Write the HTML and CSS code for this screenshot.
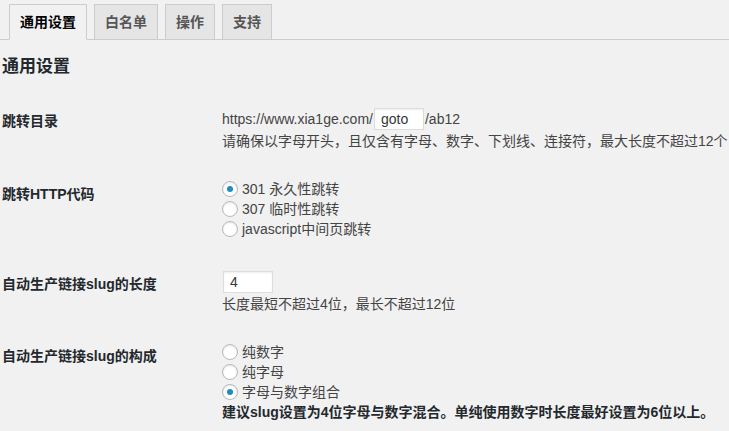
FILE: index.html
```html
<!DOCTYPE html>
<html lang="zh-CN">
<head>
<meta charset="utf-8">
<title>通用设置</title>
<link rel="stylesheet" href="styles.css">
</head>
<body>
<div class="wrap">
  <nav class="tabs">
    <a class="tab tab-active">通用设置</a>
    <a class="tab">白名单</a>
    <a class="tab">操作</a>
    <a class="tab">支持</a>
  </nav>
  <h2 class="title">通用设置</h2>
  <div class="form">
    <div class="row">
      <div class="th">跳转目录</div>
      <div class="td">
        <div class="url">https://www.xia1ge.com/<input class="text" type="text" value="goto">/ab12</div>
        <p class="desc">请确保以字母开头，且仅含有字母、数字、下划线、连接符，最大长度不超过12个</p>
      </div>
    </div>
    <div class="row">
      <div class="th th-radio">跳转HTTP代码</div>
      <div class="td">
        <label class="radio"><input type="radio" name="code" checked>301 永久性跳转</label>
        <label class="radio"><input type="radio" name="code">307 临时性跳转</label>
        <label class="radio"><input type="radio" name="code">javascript中间页跳转</label>
      </div>
    </div>
    <div class="row row-input">
      <div class="th">自动生产链接slug的长度</div>
      <div class="td">
        <div class="url"><input class="text" type="text" value="4"></div>
        <p class="desc">长度最短不超过4位，最长不超过12位</p>
      </div>
    </div>
    <div class="row">
      <div class="th">自动生产链接slug的构成</div>
      <div class="td">
        <label class="radio"><input type="radio" name="slug">纯数字</label>
        <label class="radio"><input type="radio" name="slug">纯字母</label>
        <label class="radio"><input type="radio" name="slug" checked>字母与数字组合</label>
        <p class="note">建议slug设置为4位字母与数字混合。单纯使用数字时长度最好设置为6位以上。</p>
      </div>
    </div>
  </div>
</div>
</body>
</html>
```
FILE: styles.css
```css
html, body {
  margin: 0;
  background: #f1f1f1;
}
body {
  font-family: "Liberation Sans", "Noto Sans CJK SC", sans-serif;
  font-size: 14px;
  color: #444;
  overflow: hidden;
}
.wrap {
  padding-left: 2px;
}
.tabs {
  display: flex;
  align-items: flex-end;
  gap: 7px;
  padding: 4px 0 0 7px;
  border-bottom: 1px solid #ccc;
  margin-left: -2px;
}
.tab {
  display: block;
  border: 1px solid #ccc;
  border-bottom: none;
  padding: 5px 10px;
  line-height: 24px;
  font-size: 14px;
  font-weight: 700;
  background: #e5e5e5;
  color: #555;
}
.tabs .tab:first-child { margin-left: 2px; }
.tab-active {
  background: #f1f1f1;
  color: #000;
  border-bottom: 1px solid #f1f1f1;
  margin-bottom: -1px;
}
.title {
  margin: 15px 0 0;
  font-size: 17px;
  line-height: 24px;
  font-weight: 700;
  color: #23282d;
}
.form {
  padding-top: 28px;
}
.row {
  display: grid;
  grid-template-columns: 220px 1fr;
  align-items: start;
}
.row + .row { margin-top: 28px; }
.row-input { margin-top: 31px !important; }
.th {
  padding-top: 4px;
  line-height: 20px;
  font-weight: 700;
  color: #23282d;
}
.th-radio { padding-top: 5px; }
.td {
  white-space: nowrap;
  min-width: 0;
}
.url {
  display: flex;
  align-items: center;
  height: 24px;
}
.text {
  box-sizing: border-box;
  width: 50px;
  height: 22px;
  margin: 0 1px;
  padding: 0 6px;
  border: 1px solid #ddd;
  background: #fff;
  box-shadow: inset 0 1px 2px rgba(0,0,0,.07);
  font-family: "Liberation Sans", "Noto Sans CJK SC", sans-serif;
  font-size: 14px;
  color: #32373c;
  outline: none;
}
.desc, .note {
  margin: 0;
  line-height: 20px;
}
.note {
  font-weight: 700;
  color: #23282d;
}
.radio {
  display: flex;
  align-items: center;
  height: 20px;
  line-height: 20px;
}
.radio input {
  appearance: none;
  -webkit-appearance: none;
  box-sizing: border-box;
  width: 16px;
  height: 16px;
  margin: 0 4px 0 0;
  border: 1px solid #b4b9be;
  border-radius: 50%;
  background: #fff;
  box-shadow: inset 0 1px 2px rgba(0,0,0,.1);
  display: flex;
  align-items: center;
  justify-content: center;
}
.radio input:checked::before {
  content: "";
  width: 6px;
  height: 6px;
  border-radius: 50%;
  background: #1e8cbe;
}
```
